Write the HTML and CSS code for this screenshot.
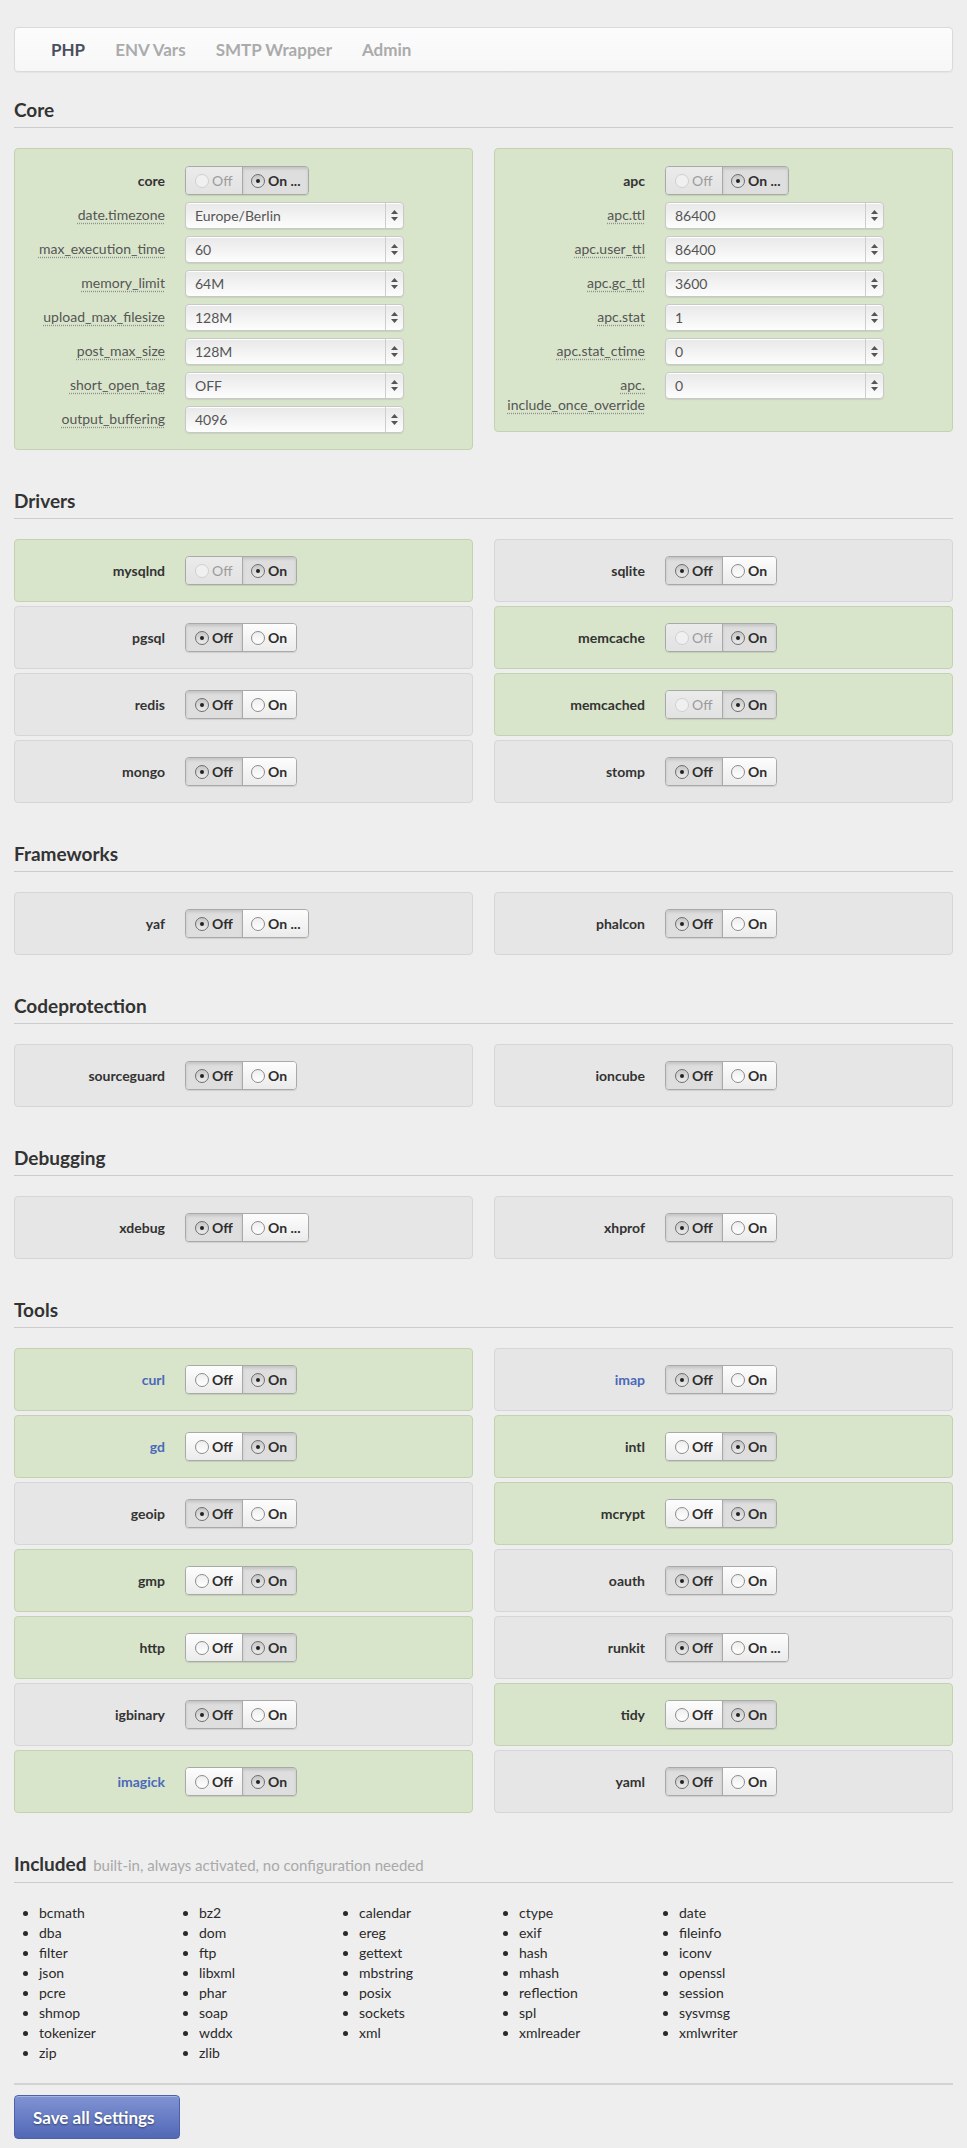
FILE: index.html
```html
<!DOCTYPE html>
<html lang="en">
<head>
<meta charset="utf-8">
<title>PHP Settings</title>
<link rel="stylesheet" href="styles.css">
</head>
<body>
<div class="page">
  <nav class="nav">
    <a class="active" href="#">PHP</a>
    <a href="#">ENV Vars</a>
    <a href="#">SMTP Wrapper</a>
    <a href="#">Admin</a>
  </nav>

  <h2 class="section-title first">Core</h2>
  <div class="grid top">
    <div class="panel on form">
      <div class="row tg"><span class="label">core</span>
        <div class="toggle"><span class="seg disabled"><i class="radio dis"></i>Off</span><span class="seg active wide"><i class="radio checked"></i>On ...</span></div>
      </div>
      <div class="row sel"><span class="label"><abbr>date.timezone</abbr></span><div class="select"><span class="val">Europe/Berlin</span><span class="arrows"><svg width="7" height="11" viewBox="0 0 7 11"><path d="M3.5 0L7 4H0z M0 7h7l-3.5 4z" fill="#555"/></svg></span></div></div>
      <div class="row sel"><span class="label"><abbr>max_execution_time</abbr></span><div class="select"><span class="val">60</span><span class="arrows"><svg width="7" height="11" viewBox="0 0 7 11"><path d="M3.5 0L7 4H0z M0 7h7l-3.5 4z" fill="#555"/></svg></span></div></div>
      <div class="row sel"><span class="label"><abbr>memory_limit</abbr></span><div class="select"><span class="val">64M</span><span class="arrows"><svg width="7" height="11" viewBox="0 0 7 11"><path d="M3.5 0L7 4H0z M0 7h7l-3.5 4z" fill="#555"/></svg></span></div></div>
      <div class="row sel"><span class="label"><abbr>upload_max_filesize</abbr></span><div class="select"><span class="val">128M</span><span class="arrows"><svg width="7" height="11" viewBox="0 0 7 11"><path d="M3.5 0L7 4H0z M0 7h7l-3.5 4z" fill="#555"/></svg></span></div></div>
      <div class="row sel"><span class="label"><abbr>post_max_size</abbr></span><div class="select"><span class="val">128M</span><span class="arrows"><svg width="7" height="11" viewBox="0 0 7 11"><path d="M3.5 0L7 4H0z M0 7h7l-3.5 4z" fill="#555"/></svg></span></div></div>
      <div class="row sel"><span class="label"><abbr>short_open_tag</abbr></span><div class="select"><span class="val">OFF</span><span class="arrows"><svg width="7" height="11" viewBox="0 0 7 11"><path d="M3.5 0L7 4H0z M0 7h7l-3.5 4z" fill="#555"/></svg></span></div></div>
      <div class="row sel"><span class="label"><abbr>output_buffering</abbr></span><div class="select"><span class="val">4096</span><span class="arrows"><svg width="7" height="11" viewBox="0 0 7 11"><path d="M3.5 0L7 4H0z M0 7h7l-3.5 4z" fill="#555"/></svg></span></div></div>
    </div>
    <div class="panel on form">
      <div class="row tg"><span class="label">apc</span>
        <div class="toggle"><span class="seg disabled"><i class="radio dis"></i>Off</span><span class="seg active wide"><i class="radio checked"></i>On ...</span></div>
      </div>
      <div class="row sel"><span class="label"><abbr>apc.ttl</abbr></span><div class="select"><span class="val">86400</span><span class="arrows"><svg width="7" height="11" viewBox="0 0 7 11"><path d="M3.5 0L7 4H0z M0 7h7l-3.5 4z" fill="#555"/></svg></span></div></div>
      <div class="row sel"><span class="label"><abbr>apc.user_ttl</abbr></span><div class="select"><span class="val">86400</span><span class="arrows"><svg width="7" height="11" viewBox="0 0 7 11"><path d="M3.5 0L7 4H0z M0 7h7l-3.5 4z" fill="#555"/></svg></span></div></div>
      <div class="row sel"><span class="label"><abbr>apc.gc_ttl</abbr></span><div class="select"><span class="val">3600</span><span class="arrows"><svg width="7" height="11" viewBox="0 0 7 11"><path d="M3.5 0L7 4H0z M0 7h7l-3.5 4z" fill="#555"/></svg></span></div></div>
      <div class="row sel"><span class="label"><abbr>apc.stat</abbr></span><div class="select"><span class="val">1</span><span class="arrows"><svg width="7" height="11" viewBox="0 0 7 11"><path d="M3.5 0L7 4H0z M0 7h7l-3.5 4z" fill="#555"/></svg></span></div></div>
      <div class="row sel"><span class="label"><abbr>apc.stat_ctime</abbr></span><div class="select"><span class="val">0</span><span class="arrows"><svg width="7" height="11" viewBox="0 0 7 11"><path d="M3.5 0L7 4H0z M0 7h7l-3.5 4z" fill="#555"/></svg></span></div></div>
      <div class="row sel"><span class="label"><abbr>apc.<br>include_once_override</abbr></span><div class="select"><span class="val">0</span><span class="arrows"><svg width="7" height="11" viewBox="0 0 7 11"><path d="M3.5 0L7 4H0z M0 7h7l-3.5 4z" fill="#555"/></svg></span></div></div>
    </div>
  </div>

  <h2 class="section-title">Drivers</h2>
  <div class="grid">
    <div class="panel on"><div class="row tg"><span class="label">mysqlnd</span><div class="toggle"><span class="seg disabled"><i class="radio dis"></i>Off</span><span class="seg active"><i class="radio checked"></i>On</span></div></div></div>
    <div class="panel off"><div class="row tg"><span class="label">sqlite</span><div class="toggle"><span class="seg active"><i class="radio checked"></i>Off</span><span class="seg"><i class="radio"></i>On</span></div></div></div>
    <div class="panel off"><div class="row tg"><span class="label">pgsql</span><div class="toggle"><span class="seg active"><i class="radio checked"></i>Off</span><span class="seg"><i class="radio"></i>On</span></div></div></div>
    <div class="panel on"><div class="row tg"><span class="label">memcache</span><div class="toggle"><span class="seg disabled"><i class="radio dis"></i>Off</span><span class="seg active"><i class="radio checked"></i>On</span></div></div></div>
    <div class="panel off"><div class="row tg"><span class="label">redis</span><div class="toggle"><span class="seg active"><i class="radio checked"></i>Off</span><span class="seg"><i class="radio"></i>On</span></div></div></div>
    <div class="panel on"><div class="row tg"><span class="label">memcached</span><div class="toggle"><span class="seg disabled"><i class="radio dis"></i>Off</span><span class="seg active"><i class="radio checked"></i>On</span></div></div></div>
    <div class="panel off"><div class="row tg"><span class="label">mongo</span><div class="toggle"><span class="seg active"><i class="radio checked"></i>Off</span><span class="seg"><i class="radio"></i>On</span></div></div></div>
    <div class="panel off"><div class="row tg"><span class="label">stomp</span><div class="toggle"><span class="seg active"><i class="radio checked"></i>Off</span><span class="seg"><i class="radio"></i>On</span></div></div></div>
  </div>

  <h2 class="section-title">Frameworks</h2>
  <div class="grid">
    <div class="panel off"><div class="row tg"><span class="label">yaf</span><div class="toggle"><span class="seg active"><i class="radio checked"></i>Off</span><span class="seg wide"><i class="radio"></i>On ...</span></div></div></div>
    <div class="panel off"><div class="row tg"><span class="label">phalcon</span><div class="toggle"><span class="seg active"><i class="radio checked"></i>Off</span><span class="seg"><i class="radio"></i>On</span></div></div></div>
  </div>

  <h2 class="section-title">Codeprotection</h2>
  <div class="grid">
    <div class="panel off"><div class="row tg"><span class="label">sourceguard</span><div class="toggle"><span class="seg active"><i class="radio checked"></i>Off</span><span class="seg"><i class="radio"></i>On</span></div></div></div>
    <div class="panel off"><div class="row tg"><span class="label">ioncube</span><div class="toggle"><span class="seg active"><i class="radio checked"></i>Off</span><span class="seg"><i class="radio"></i>On</span></div></div></div>
  </div>

  <h2 class="section-title">Debugging</h2>
  <div class="grid">
    <div class="panel off"><div class="row tg"><span class="label">xdebug</span><div class="toggle"><span class="seg active"><i class="radio checked"></i>Off</span><span class="seg wide"><i class="radio"></i>On ...</span></div></div></div>
    <div class="panel off"><div class="row tg"><span class="label">xhprof</span><div class="toggle"><span class="seg active"><i class="radio checked"></i>Off</span><span class="seg"><i class="radio"></i>On</span></div></div></div>
  </div>

  <h2 class="section-title">Tools</h2>
  <div class="grid">
    <div class="panel on"><div class="row tg"><span class="label link">curl</span><div class="toggle"><span class="seg"><i class="radio"></i>Off</span><span class="seg active"><i class="radio checked"></i>On</span></div></div></div>
    <div class="panel off"><div class="row tg"><span class="label link">imap</span><div class="toggle"><span class="seg active"><i class="radio checked"></i>Off</span><span class="seg"><i class="radio"></i>On</span></div></div></div>
    <div class="panel on"><div class="row tg"><span class="label link">gd</span><div class="toggle"><span class="seg"><i class="radio"></i>Off</span><span class="seg active"><i class="radio checked"></i>On</span></div></div></div>
    <div class="panel on"><div class="row tg"><span class="label">intl</span><div class="toggle"><span class="seg"><i class="radio"></i>Off</span><span class="seg active"><i class="radio checked"></i>On</span></div></div></div>
    <div class="panel off"><div class="row tg"><span class="label">geoip</span><div class="toggle"><span class="seg active"><i class="radio checked"></i>Off</span><span class="seg"><i class="radio"></i>On</span></div></div></div>
    <div class="panel on"><div class="row tg"><span class="label">mcrypt</span><div class="toggle"><span class="seg"><i class="radio"></i>Off</span><span class="seg active"><i class="radio checked"></i>On</span></div></div></div>
    <div class="panel on"><div class="row tg"><span class="label">gmp</span><div class="toggle"><span class="seg"><i class="radio"></i>Off</span><span class="seg active"><i class="radio checked"></i>On</span></div></div></div>
    <div class="panel off"><div class="row tg"><span class="label">oauth</span><div class="toggle"><span class="seg active"><i class="radio checked"></i>Off</span><span class="seg"><i class="radio"></i>On</span></div></div></div>
    <div class="panel on"><div class="row tg"><span class="label">http</span><div class="toggle"><span class="seg"><i class="radio"></i>Off</span><span class="seg active"><i class="radio checked"></i>On</span></div></div></div>
    <div class="panel off"><div class="row tg"><span class="label">runkit</span><div class="toggle"><span class="seg active"><i class="radio checked"></i>Off</span><span class="seg wide"><i class="radio"></i>On ...</span></div></div></div>
    <div class="panel off"><div class="row tg"><span class="label">igbinary</span><div class="toggle"><span class="seg active"><i class="radio checked"></i>Off</span><span class="seg"><i class="radio"></i>On</span></div></div></div>
    <div class="panel on"><div class="row tg"><span class="label">tidy</span><div class="toggle"><span class="seg"><i class="radio"></i>Off</span><span class="seg active"><i class="radio checked"></i>On</span></div></div></div>
    <div class="panel on"><div class="row tg"><span class="label link">imagick</span><div class="toggle"><span class="seg"><i class="radio"></i>Off</span><span class="seg active"><i class="radio checked"></i>On</span></div></div></div>
    <div class="panel off"><div class="row tg"><span class="label">yaml</span><div class="toggle"><span class="seg active"><i class="radio checked"></i>Off</span><span class="seg"><i class="radio"></i>On</span></div></div></div>
  </div>

  <h2 class="section-title">Included <small class="sub">built-in, always activated, no configuration needed</small></h2>
  <div class="included">
    <ul><li>bcmath</li><li>dba</li><li>filter</li><li>json</li><li>pcre</li><li>shmop</li><li>tokenizer</li><li>zip</li></ul>
    <ul><li>bz2</li><li>dom</li><li>ftp</li><li>libxml</li><li>phar</li><li>soap</li><li>wddx</li><li>zlib</li></ul>
    <ul><li>calendar</li><li>ereg</li><li>gettext</li><li>mbstring</li><li>posix</li><li>sockets</li><li>xml</li></ul>
    <ul><li>ctype</li><li>exif</li><li>hash</li><li>mhash</li><li>reflection</li><li>spl</li><li>xmlreader</li></ul>
    <ul><li>date</li><li>fileinfo</li><li>iconv</li><li>openssl</li><li>session</li><li>sysvmsg</li><li>xmlwriter</li></ul>
  </div>
  <hr class="divider">
  <button class="btn" type="button">Save all Settings</button>
</div>
</body>
</html>
```

FILE: styles.css
```css
* { box-sizing: border-box; }

body {
  margin: 0;
  background: #eeeeee;
  font-family: Lato, "Open Sans", "DejaVu Sans", sans-serif;
  color: #333;
}

.page {
  padding: 27px 14px 11px;
}

/* nav */
.nav {
  height: 45px;
  display: flex;
  padding-left: 21px;
  border: 1px solid #dadada;
  border-radius: 4px;
  background: linear-gradient(#fcfcfc, #f7f7f7);
  box-shadow: 0 1px 1px rgba(0, 0, 0, 0.04);
}
.nav a {
  padding: 0 15px;
  line-height: 43px;
  font-size: 17px;
  font-weight: 700;
  color: #ababab;
  text-decoration: none;
}
.nav a.active { color: #4b4f60; }

/* section headings */
.section-title {
  margin: 39px 0 20px;
  padding-bottom: 5px;
  font-size: 19px;
  line-height: 24px;
  font-weight: 700;
  color: #333;
  border-bottom: 1px solid #cccccc;
}
.section-title.first { margin-top: 26px; }
.section-title .sub {
  margin-left: 2px;
  font-size: 15px;
  font-weight: 400;
  color: #a9a9a9;
}

/* grids & panels */
.grid {
  display: grid;
  grid-template-columns: 1fr 1fr;
  column-gap: 21px;
  row-gap: 4px;
}
.grid.top { align-items: start; }

.panel {
  border: 1px solid;
  border-radius: 4px;
  padding: 16px 0;
}
.panel.on { background: #d9e5cb; border-color: #c3d3b1; }
.panel.off { background: #e6e6e6; border-color: #d6d6d6; }
.panel.form { padding: 17px 0 9px; }

.row {
  display: flex;
  align-items: center;
  column-gap: 20px;
}
.form .row { margin-bottom: 7px; }

.label {
  flex: 0 0 140px;
  margin-left: 10px;
  text-align: right;
  font-size: 14px;
}
.row.tg .label { font-weight: 700; color: #333; }
.row.tg .label.link { color: #4a69b9; }
.row.sel { align-items: flex-start; }
.row.sel .label {
  padding-top: 3px;
  line-height: 20px;
  color: #555;
}
.label abbr {
  text-decoration: underline dotted #8f8f8f;
  text-underline-offset: 3px;
}

/* select */
.select {
  width: 219px;
  height: 27px;
  display: flex;
  border: 1px solid #c8c8c8;
  border-radius: 4px;
  background: linear-gradient(#e8e8e8, #fdfdfd);
  box-shadow: 0 1px 1px rgba(0, 0, 0, 0.08), inset 0 1px 0 #fff;
  font-size: 14px;
  color: #555;
}
.select .val {
  flex: 1;
  padding-left: 9px;
  line-height: 25px;
}
.select .arrows {
  width: 18px;
  display: flex;
  align-items: center;
  justify-content: center;
  border-left: 1px solid #cdcdcd;
}

/* toggle */
.toggle {
  display: inline-flex;
  height: 29px;
  border: 1px solid #a9a9a9;
  border-radius: 4px;
  overflow: hidden;
  box-shadow: 0 1px 1px rgba(0, 0, 0, 0.1);
}
.seg {
  width: 56px;
  display: flex;
  align-items: center;
  gap: 3px;
  padding-left: 9px;
  font-size: 14px;
  font-weight: 700;
  color: #2e2e2e;
  background: linear-gradient(#fdfdfd, #ebebeb);
}
.seg + .seg {
  width: 54px;
  padding-left: 8px;
  border-left: 1px solid #a9a9a9;
}
.seg + .seg.wide { width: 66px; }
.seg.active {
  background: #dedede;
  box-shadow: inset 0 2px 3px rgba(0, 0, 0, 0.12);
}
.seg.disabled {
  color: #9c9c9c;
  font-weight: 400;
  background: linear-gradient(#ebebeb, #e2e2e2);
}

.radio {
  position: relative;
  flex: none;
  width: 14px;
  height: 14px;
  border: 1px solid #8c8c8c;
  border-radius: 50%;
  background: linear-gradient(#eeeeee, #ffffff);
}
.radio.checked {
  border-color: #6e6e6e;
  background: linear-gradient(#c6c6c6, #ececec);
}
.radio.checked::after {
  content: "";
  position: absolute;
  left: 4px;
  top: 4px;
  width: 4px;
  height: 4px;
  border-radius: 50%;
  background: #222;
}
.radio.dis {
  border-color: #d0d0d0;
  background: #f0f0f0;
}

/* included list */
.included {
  display: flex;
  padding-left: 25px;
  margin-top: 20px;
}
.included ul {
  width: 160px;
  margin: 0;
  padding: 0;
  list-style: disc;
}
.included li {
  font-size: 14px;
  line-height: 20px;
  color: #2a2a2a;
}

.divider {
  margin: 20px 0 10px;
  border: 0;
  border-top: 2px solid #d2d2d2;
}

.btn {
  width: 166px;
  height: 44px;
  padding: 0 0 0 18px;
  text-align: left;
  border: 1px solid #4c61aa;
  border-radius: 4px;
  background: linear-gradient(#8093d3, #5168b6);
  box-shadow: inset 0 1px 0 rgba(255, 255, 255, 0.3);
  color: #fff;
  font-family: Lato, "Open Sans", sans-serif;
  font-size: 17px;
  font-weight: 700;
  text-shadow: 0 1px 2px rgba(0, 0, 0, 0.45);
}
```
